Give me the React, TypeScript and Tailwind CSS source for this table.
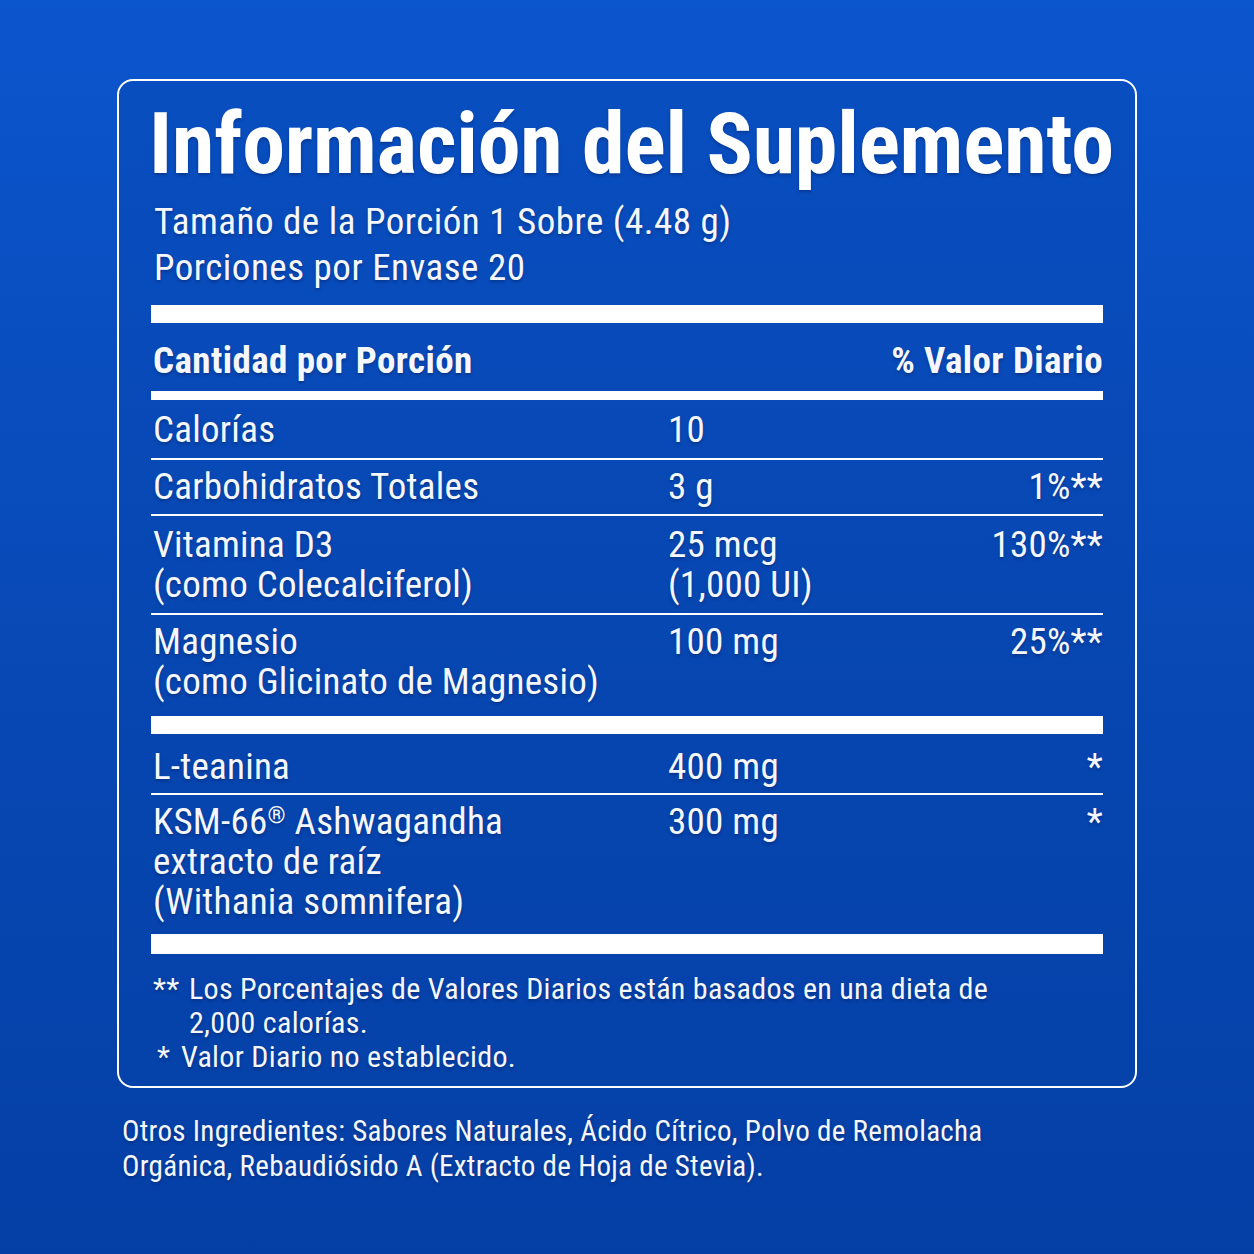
const rows = [
  { name: ['Calorías'], amount: ['10'], dv: '', pt: 'pt-[10px]', pb: 'pb-[8px]' },
  { name: ['Carbohidratos Totales'], amount: ['3 g'], dv: '1%**', pt: 'pt-[7px]', pb: 'pb-[7px]' },
  { name: ['Vitamina D3', '(como Colecalciferol)'], amount: ['25 mcg', '(1,000 UI)'], dv: '130%**', pt: 'pt-[9px]', pb: 'pb-[8px]' },
  { name: ['Magnesio', '(como Glicinato de Magnesio)'], amount: ['100 mg'], dv: '25%**', pt: 'pt-[7px]', pb: 'pb-[14px]' },
];

const extras = [
  { name: ['L-teanina'], amount: ['400 mg'], dv: '*', pt: 'pt-[13px]', pb: 'pb-[6px]' },
  {
    name: [
      <>
        KSM-66<span className="relative -top-[11px] text-[23px] leading-none">®</span> Ashwagandha
      </>,
      'extracto de raíz',
      '(Withania somnifera)',
    ],
    amount: ['300 mg'],
    dv: '*',
    pt: 'pt-[7px]',
    pb: 'pb-[12px]',
  },
];

type Row = { name: React.ReactNode[]; amount: string[]; dv: string; pt: string; pb: string };

function NutrientRow({ row, last }: { row: Row; last?: boolean }) {
  return (
    <div className={`flex ${row.pt} ${row.pb} ${last ? '' : 'border-b-2 border-white'}`}>
      <div className="w-[517px] flex flex-col pl-[2px]">
        {row.name.map((n, i) => (
          <span key={i}>{n}</span>
        ))}
      </div>
      <div className="flex-1 flex flex-col">
        {row.amount.map((a, i) => (
          <span key={i}>{a}</span>
        ))}
      </div>
      <div className="text-right">{row.dv}</div>
    </div>
  );
}

export default function App() {
  return (
    <div className="w-[1254px] h-[1254px] bg-gradient-to-b from-[#0b55cd] via-[#0849b6] to-[#043fa5] text-[#f5f7fc] font-['Roboto_Condensed','Roboto',sans-serif] [text-shadow:0_2px_3px_rgba(0,20,70,0.35)] pt-[79px] px-[117px]">
      <div className="border-2 border-white rounded-[16px] px-[32px] pt-[20px] pb-[12px] bg-[#0641a8]/30">
        <h1 className="text-[86px] font-bold leading-none tracking-[-0.2px] whitespace-nowrap -ml-[2px] text-white">
          Información del Suplemento
        </h1>
        <div className="mt-[12px] text-[37px] leading-[46px] tracking-[0.5px] pl-[3px]">
          <p>Tamaño de la Porción 1 Sobre (4.48 g)</p>
          <p>Porciones por Envase 20</p>
        </div>
        <div className="mt-[14px] h-[18px] bg-white" />

        <div className="flex justify-between pt-[18px] pb-[10px] text-[37px] leading-[40px] font-bold tracking-[0.4px] pl-[2px]">
          <span>Cantidad por Porción</span>
          <span>% Valor Diario</span>
        </div>
        <div className="h-[9px] bg-white" />

        <div className="text-[37px] leading-[40px] tracking-[0.25px]">
          {rows.map((r, i) => (
            <NutrientRow key={i} row={r} last={i === rows.length - 1} />
          ))}
        </div>
        <div className="h-[18px] bg-white" />

        <div className="text-[37px] leading-[40px] tracking-[0.25px]">
          {extras.map((r, i) => (
            <NutrientRow key={i} row={r} last={i === extras.length - 1} />
          ))}
        </div>
        <div className="h-[20px] bg-white" />

        <div className="pt-[18px] text-[30px] leading-[34px] tracking-[0.3px]">
          <div className="flex">
            <span className="w-[38px] pl-[2px] shrink-0">**</span>
            <span className="w-[820px]">Los Porcentajes de Valores Diarios están basados en una dieta de 2,000 calorías.</span>
          </div>
          <div className="flex">
            <span className="w-[30px] pl-[6px] shrink-0">*</span>
            <span>Valor Diario no establecido.</span>
          </div>
        </div>
      </div>

      <p className="mt-[26px] pl-[5px] w-[900px] text-[29px] leading-[35px] tracking-[0.3px]">
        Otros Ingredientes: Sabores Naturales, Ácido Cítrico, Polvo de Remolacha Orgánica, Rebaudiósido A (Extracto de Hoja de Stevia).
      </p>
    </div>
  );
}
